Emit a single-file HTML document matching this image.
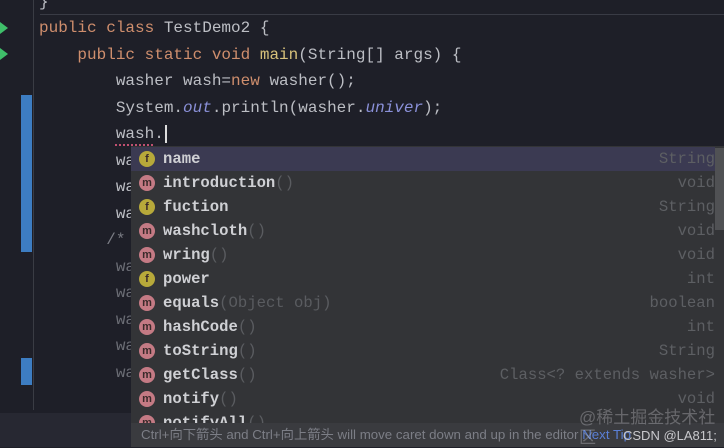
<!DOCTYPE html><html><head><style>
body{margin:0;width:724px;height:447px;overflow:hidden;background:#1e1f28;font-family:"Liberation Mono",monospace;position:relative}
.ln{position:absolute;left:39px;font-size:16px;height:26.6px;line-height:26.6px;color:#bcbec4;white-space:pre}
.k{color:#cf8e6d}.f{color:#56a8f5}.i{color:#8a90d8;font-style:italic}.m{color:#d6c07a}
.g{color:#6b6d75}
#pop{position:absolute;left:131px;top:146px;width:593px;height:301px;background:#333437}
.r{position:absolute;left:0;width:584px;height:24px;line-height:24px;font-size:15.6px}
.r .ic{position:absolute;left:8px;top:4px;width:16px;height:16px;border-radius:50%;font:bold 11px/16px "Liberation Sans",sans-serif;text-align:center;color:#3a2a2a}
.ic.fi{background:#b7a93a}.ic.me{background:#c47a84}
.r .n{position:absolute;left:32px;color:#cfd0d4;font-weight:bold}
.r .n span{color:#5a5c60;font-weight:normal}
.r .t{position:absolute;right:0;color:#5d5f63}
</style></head><body>
<div style="position:absolute;left:33px;top:0;width:1px;height:410px;background:#3a3c44"></div>
<div style="position:absolute;left:40px;top:14px;width:684px;height:1px;background:#393b45"></div>
<div style="position:absolute;left:21px;top:95px;width:11px;height:157px;background:#3d7dc2"></div>
<div style="position:absolute;left:21px;top:358px;width:11px;height:27px;background:#3d7dc2"></div>
<div style="position:absolute;left:0;top:22px;width:0;height:0;border-left:8px solid #3fbf6a;border-top:6px solid transparent;border-bottom:6px solid transparent"></div>
<div style="position:absolute;left:0;top:48px;width:0;height:0;border-left:8px solid #3fbf6a;border-top:6px solid transparent;border-bottom:6px solid transparent"></div>
<div style="position:absolute;left:0;top:413px;width:131px;height:34px;background:#272832"></div>
<div class="ln" style="top:-11px">}</div>
<div class="ln" style="top:15px"><span class="k">public class</span> TestDemo2 {</div>
<div class="ln" style="top:42px">    <span class="k">public static void</span> <span class="m">main</span>(String[] args) {</div>
<div class="ln" style="top:68px">        washer wash=<span class="k">new</span> washer();</div>
<div class="ln" style="top:95px">        System.<span class="i">out</span>.println(washer.<span class="i">univer</span>);</div>
<div class="ln" style="top:121px">        wash.<span style="border-left:2px solid #ddd;margin-left:1px"> </span></div>
<div style="position:absolute;left:115px;top:144px;width:40px;height:2px;background:repeating-linear-gradient(90deg,#c05070 0 2px,transparent 2px 4px)"></div>
<div class="ln" style="top:148px">        wa</div>
<div class="ln" style="top:174px">        wa</div>
<div class="ln" style="top:201px">        wa</div>
<div class="ln g" style="top:227px;color:#7a7c84">       /*</div>
<div class="ln g" style="top:254px">        wa</div>
<div class="ln g" style="top:280px">        wa</div>
<div class="ln g" style="top:307px">        wa</div>
<div class="ln g" style="top:333px">        wa</div>
<div class="ln g" style="top:360px">        wa</div>
<div id="pop">
<div style="position:absolute;left:0;top:1px;width:584px;height:24px;background:#3b3a52"></div>
<div style="position:absolute;right:0;top:2px;width:9px;height:82px;background:#505154"></div>
<div class="r" style="top:1px"><div class="ic fi">f</div><div class="n">name</div><div class="t">String</div></div>
<div class="r" style="top:25px"><div class="ic me">m</div><div class="n">introduction<span>()</span></div><div class="t">void</div></div>
<div class="r" style="top:49px"><div class="ic fi">f</div><div class="n">fuction</div><div class="t">String</div></div>
<div class="r" style="top:73px"><div class="ic me">m</div><div class="n">washcloth<span>()</span></div><div class="t">void</div></div>
<div class="r" style="top:97px"><div class="ic me">m</div><div class="n">wring<span>()</span></div><div class="t">void</div></div>
<div class="r" style="top:121px"><div class="ic fi">f</div><div class="n">power</div><div class="t">int</div></div>
<div class="r" style="top:145px"><div class="ic me">m</div><div class="n">equals<span>(Object obj)</span></div><div class="t">boolean</div></div>
<div class="r" style="top:169px"><div class="ic me">m</div><div class="n">hashCode<span>()</span></div><div class="t">int</div></div>
<div class="r" style="top:193px"><div class="ic me">m</div><div class="n">toString<span>()</span></div><div class="t">String</div></div>
<div class="r" style="top:217px"><div class="ic me">m</div><div class="n">getClass<span>()</span></div><div class="t">Class&lt;? extends washer&gt;</div></div>
<div class="r" style="top:241px"><div class="ic me">m</div><div class="n">notify<span>()</span></div><div class="t">void</div></div>
<div class="r" style="top:265px"><div class="ic me">m</div><div class="n">notifyAll<span>()</span></div></div>
<div style="position:absolute;left:0;top:277px;width:593px;height:24px;background:#3a3b3f;font:13.3px/24px 'Liberation Sans','Noto Sans CJK SC',sans-serif;color:#7c7e86;padding-left:10px;box-sizing:border-box;white-space:nowrap">Ctrl+向下箭头 and Ctrl+向上箭头 will move caret down and up in the editor <span style="color:#5a7fd6">Next Tip</span></div>
<div style="position:absolute;left:448px;top:262px;font:17px/20px 'Liberation Sans','Noto Sans CJK SC',sans-serif;color:rgba(200,200,205,0.35)">@稀土掘金技术社区</div>
<div style="position:absolute;left:492px;top:280px;font:13px/20px 'Liberation Sans',sans-serif;color:#c8c8cc">CSDN @LA811;</div>
</div>
</body></html>
